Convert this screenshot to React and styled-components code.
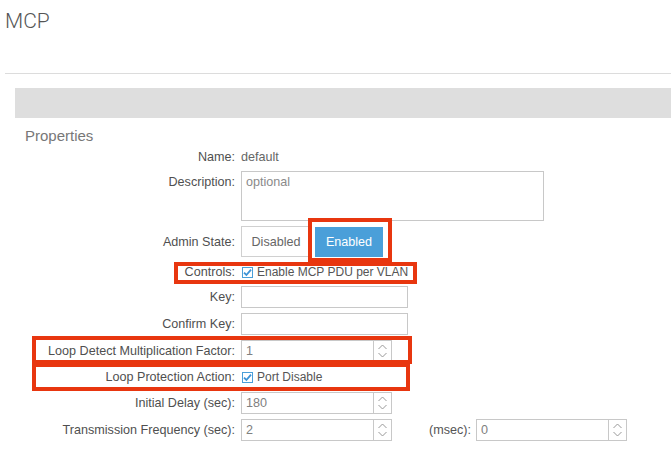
import styled, { createGlobalStyle } from 'styled-components';

const GlobalStyle = createGlobalStyle`
  body {
    margin: 0;
    background: #fff;
    font-family: "Liberation Sans", Arial, sans-serif;
  }
`;

const Chevrons = () => (
  <svg width="11" height="16" viewBox="0 0 11 16" fill="none" stroke="#999" strokeWidth="1">
    <path d="M1.5 6 L5.5 2 L9.5 6" />
    <path d="M1.5 10 L5.5 14 L9.5 10" />
  </svg>
);

const Check = () => (
  <svg width="9" height="9" viewBox="0 0 9 9" fill="none" stroke="#3d93d6" strokeWidth="1.8">
    <path d="M1 4.6 L3.4 7 L8 1.6" />
  </svg>
);

const NumberInput = ({ value }) => (
  <NumberBox>
    <NumberValue>{value}</NumberValue>
    <Spinner>
      <Chevrons />
    </Spinner>
  </NumberBox>
);

const Checkbox = ({ label }) => (
  <CheckWrap>
    <CheckBox>
      <Check />
    </CheckBox>
    <CheckText>{label}</CheckText>
  </CheckWrap>
);

const App = () => {
  return (
    <Page>
      <GlobalStyle />
      <Header>
        <Title>MCP</Title>
      </Header>
      <Toolbar />
      <SectionTitle>Properties</SectionTitle>
      <Form>
        <Row $h={18} $mt={3}>
          <Label>Name:</Label>
          <Value>default</Value>
        </Row>
        <Row $h={50} $top>
          <Label $pt={4}>Description:</Label>
          <TextArea>optional</TextArea>
        </Row>
        <Row $h={31}>
          <Label>Admin State:</Label>
          <Segment>
            <SegButton>Disabled</SegButton>
            <SegButton $active>Enabled</SegButton>
          </Segment>
          <Highlight $l={308} $t={-8} $w={84} $hh={44} />
        </Row>
        <Row $h={20}>
          <Label>Controls:</Label>
          <Checkbox label="Enable MCP PDU per VLAN" />
          <Highlight $l={174} $t={0} $w={243} $hh={22} />
        </Row>
        <Row $mt={4}>
          <Label>Key:</Label>
          <TextInput />
        </Row>
        <Row>
          <Label>Confirm Key:</Label>
          <TextInput />
        </Row>
        <Row>
          <Label>Loop Detect Multiplication Factor:</Label>
          <NumberInput value="1" />
          <Highlight $l={32} $t={-4} $w={380} $hh={28} />
        </Row>
        <Row $h={20}>
          <Label>Loop Protection Action:</Label>
          <Checkbox label="Port Disable" />
          <Highlight $l={32} $t={-4} $w={378} $hh={28} />
        </Row>
        <Row>
          <Label>Initial Delay (sec):</Label>
          <NumberInput value="180" />
        </Row>
        <Row>
          <Label>Transmission Frequency (sec):</Label>
          <NumberInput value="2" />
          <SideLabel>(msec):</SideLabel>
          <NumberInput value="0" />
        </Row>
      </Form>
    </Page>
  );
};

const Page = styled.div`
  width: 671px;
  height: 470px;
  overflow: hidden;
  color: #555;
  font-size: 12px;
`;

const Header = styled.div`
  margin-left: 5px;
  height: 74px;
  border-bottom: 1px solid #dcdcdc;
  box-sizing: border-box;
  padding-top: 9px;
`;

const Title = styled.h1`
  margin: 0;
  font-family: Roboto, "Liberation Sans", sans-serif;
  font-weight: 300;
  font-size: 21px;
  line-height: 24px;
  color: #555;
`;

const Toolbar = styled.div`
  margin: 14px 0 0 15px;
  height: 30px;
  background: #dedede;
`;

const SectionTitle = styled.div`
  margin: 9px 0 0 25px;
  font-size: 15px;
  line-height: 18px;
  color: #777;
`;

const Form = styled.div`
  display: flex;
  flex-direction: column;
`;

const Row = styled.div`
  position: relative;
  display: flex;
  align-items: ${(p) => (p.$top ? 'flex-start' : 'center')};
  height: ${(p) => p.$h || 22}px;
  margin-top: ${(p) => (p.$mt ?? 5)}px;
`;

const Label = styled.div`
  width: 241px;
  flex-shrink: 0;
  box-sizing: border-box;
  padding-right: 6px;
  padding-top: ${(p) => p.$pt || 0}px;
  text-align: right;
  color: #4f4f4f;
  font-size: 12.6px;
  line-height: 14px;
  white-space: nowrap;
`;

const Value = styled.div`
  color: #666;
  font-size: 12.6px;
`;

const TextArea = styled.div`
  width: 303px;
  height: 50px;
  box-sizing: border-box;
  border: 1px solid #c8c8c8;
  padding: 3px 4px;
  color: #8a8a8a;
  font-size: 12.6px;
  line-height: 14px;
`;

const Segment = styled.div`
  display: flex;
  gap: 4px;
  height: 31px;
`;

const SegButton = styled.div`
  width: ${(p) => (p.$active ? 68 : 70)}px;
  box-sizing: border-box;
  display: flex;
  align-items: center;
  justify-content: center;
  border: 1px solid ${(p) => (p.$active ? '#4a9fd9' : '#d0d0d0')};
  background: ${(p) => (p.$active ? '#4a9fd9' : '#fff')};
  color: ${(p) => (p.$active ? '#fff' : '#666')};
  font-size: 12.6px;
  margin-top: ${(p) => (p.$active ? 1 : 0)}px;
`;

const Highlight = styled.div`
  position: absolute;
  left: ${(p) => p.$l}px;
  top: ${(p) => p.$t}px;
  width: ${(p) => p.$w}px;
  height: ${(p) => p.$hh}px;
  box-sizing: border-box;
  border: 4px solid #e8360f;
  pointer-events: none;
`;

const CheckWrap = styled.div`
  display: flex;
  align-items: center;
  gap: 4px;
  margin-left: 1px;
`;

const CheckBox = styled.div`
  width: 11px;
  height: 11px;
  box-sizing: border-box;
  border: 1px solid #4a9fd9;
  display: flex;
  align-items: center;
  justify-content: center;
  background: #fff;
`;

const CheckText = styled.span`
  color: #555;
`;

const TextInput = styled.div`
  width: 167px;
  height: 22px;
  box-sizing: border-box;
  border: 1px solid #c8c8c8;
`;

const NumberBox = styled.div`
  display: flex;
  width: 151px;
  height: 22px;
  box-sizing: border-box;
  border: 1px solid #c8c8c8;
`;

const NumberValue = styled.div`
  flex: 1;
  padding-left: 4px;
  line-height: 20px;
  font-size: 12.6px;
  color: #808080;
`;

const Spinner = styled.div`
  width: 17px;
  border-left: 1px solid #c8c8c8;
  display: flex;
  align-items: center;
  justify-content: center;
`;

const SideLabel = styled.div`
  margin: 0 5px 0 37px;
  font-size: 12.6px;
  color: #555;
`;

export default App;
